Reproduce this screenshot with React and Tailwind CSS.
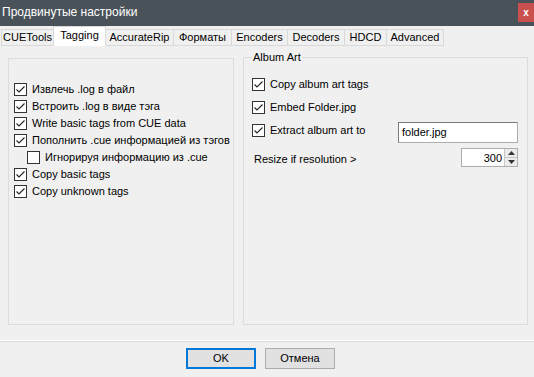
import React from 'react'

const FONT = { fontFamily: '"Liberation Sans", Arial, sans-serif' }

function Check({ checked }) {
  return (
    <svg width="13" height="13" viewBox="0 0 13 13" className="shrink-0">
      <rect x="0.5" y="0.5" width="12" height="12" fill="#fff" stroke="#333" />
      {checked && <polyline points="2.5,6.5 5,9 10.5,3.5" fill="none" stroke="#222" strokeWidth="1.1" />}
    </svg>
  )
}

function Row({ checked, label, indent }) {
  return (
    <div className={`flex h-[17px] items-center gap-[5px] ${indent ? 'pl-[13px]' : ''}`}>
      <Check checked={checked} />
      <span className="text-[11px] text-black">{label}</span>
    </div>
  )
}

const TABS = ['CUETools', 'Tagging', 'AccurateRip', 'Форматы', 'Encoders', 'Decoders', 'HDCD', 'Advanced']
const TAB_W = [53, 53, 69, 59, 57, 58, 43, 58]

export default function App() {
  return (
    <div className="flex h-[377px] w-[534px] flex-col bg-[#f0f0f0]" style={FONT}>
      {/* title bar */}
      <div className="flex h-[26px] shrink-0 items-start bg-[#4a5259]">
        <span className="pl-[2px] pt-[5px] text-[12px] leading-[14px] text-white">Продвинутые настройки</span>
        <div className="ml-auto mt-[3px] flex h-[19px] w-[16px] items-center justify-center bg-[#c9504f] text-[10px] font-bold leading-none text-white">
          x
        </div>
      </div>

      {/* tabs */}
      <div className="flex h-[20px] shrink-0 items-end pl-[1px]">
        {TABS.map((t, i) =>
          t === 'Tagging' ? (
            <div
              key={t}
              style={{ width: TAB_W[i] }}
              className="-ml-px flex h-[20px] items-center justify-center border border-b-0 border-[#d9d9d9] bg-white pb-[3px] text-[11px] text-black"
            >
              {t}
            </div>
          ) : (
            <div
              key={t}
              style={{ width: TAB_W[i] }}
              className="-ml-px flex h-[17px] items-center justify-center border border-[#d9d9d9] bg-[#f0f0f0] text-[11px] text-black first:ml-0"
            >
              {t}
            </div>
          )
        )}
      </div>

      {/* page */}
      <div className="flex h-[294px] shrink-0 gap-[9px] pl-[8px] pt-[5px]">
        <div className="mt-[7px] flex h-[267px] w-[226px] flex-col border border-[#dcdcdc] pl-[5px] pt-[22px]">
          <Row checked label="Извлечь .log в файл" />
          <Row checked label="Встроить .log в виде тэга" />
          <Row checked label="Write basic tags from CUE data" />
          <Row checked label="Пополнить .cue информацией из тэгов" />
          <Row indent label="Игнорируя информацию из .cue" />
          <Row checked label="Copy basic tags" />
          <Row checked label="Copy unknown tags" />
        </div>

        <fieldset className="h-[274px] w-[285px] border border-[#dcdcdc] pl-[8px] pr-[9px]">
          <legend className="px-[1px] text-[11px] leading-[13px] text-black">Album Art</legend>
          <div className="flex flex-col gap-[6px] pt-[12px]">
            <Row checked label="Copy album art tags" />
            <Row checked label="Embed Folder.jpg" />
            <div className="flex items-start justify-between">
              <Row checked label="Extract album art to" />
              <div className="flex h-[21px] w-[120px] items-center border border-[#7a7a7a] border-r-[#adadad] border-b-[#adadad] bg-white pl-[3px] text-[11px]">
                folder.jpg
              </div>
            </div>
            <div className="-mt-[1px] flex items-center justify-between">
              <span className="pl-[2px] pt-[3px] text-[11px]">Resize if resolution &gt;</span>
              <div className="flex h-[19px] w-[57px] items-center border border-[#adadad] bg-white">
                <span className="flex-1 pr-[2px] text-right text-[11px]">300</span>
                <div className="flex h-full w-[13px] flex-col border-l border-[#c8c8c8]">
                  <div className="flex flex-1 items-center justify-center border-b border-[#c8c8c8] bg-[#ececec]">
                    <svg width="7" height="4" viewBox="0 0 7 4"><polygon points="0,4 7,4 3.5,0" fill="#333" /></svg>
                  </div>
                  <div className="flex flex-1 items-center justify-center bg-[#ececec]">
                    <svg width="7" height="4" viewBox="0 0 7 4"><polygon points="0,0 7,0 3.5,4" fill="#333" /></svg>
                  </div>
                </div>
              </div>
            </div>
          </div>
        </fieldset>
      </div>

      {/* separator */}
      <div className="h-[2px] shrink-0 border-b border-[#dadada] bg-white" />

      {/* buttons */}
      <div className="flex justify-start gap-[9px] pl-[186px] pt-[6px]">
        <button className="h-[21px] w-[70px] border-2 border-[#0078d7] bg-[#e1e1e1] text-[11px] text-black">OK</button>
        <button className="h-[21px] w-[70px] border border-[#adadad] bg-[#e1e1e1] text-[11px] text-black">Отмена</button>
      </div>
    </div>
  )
}
